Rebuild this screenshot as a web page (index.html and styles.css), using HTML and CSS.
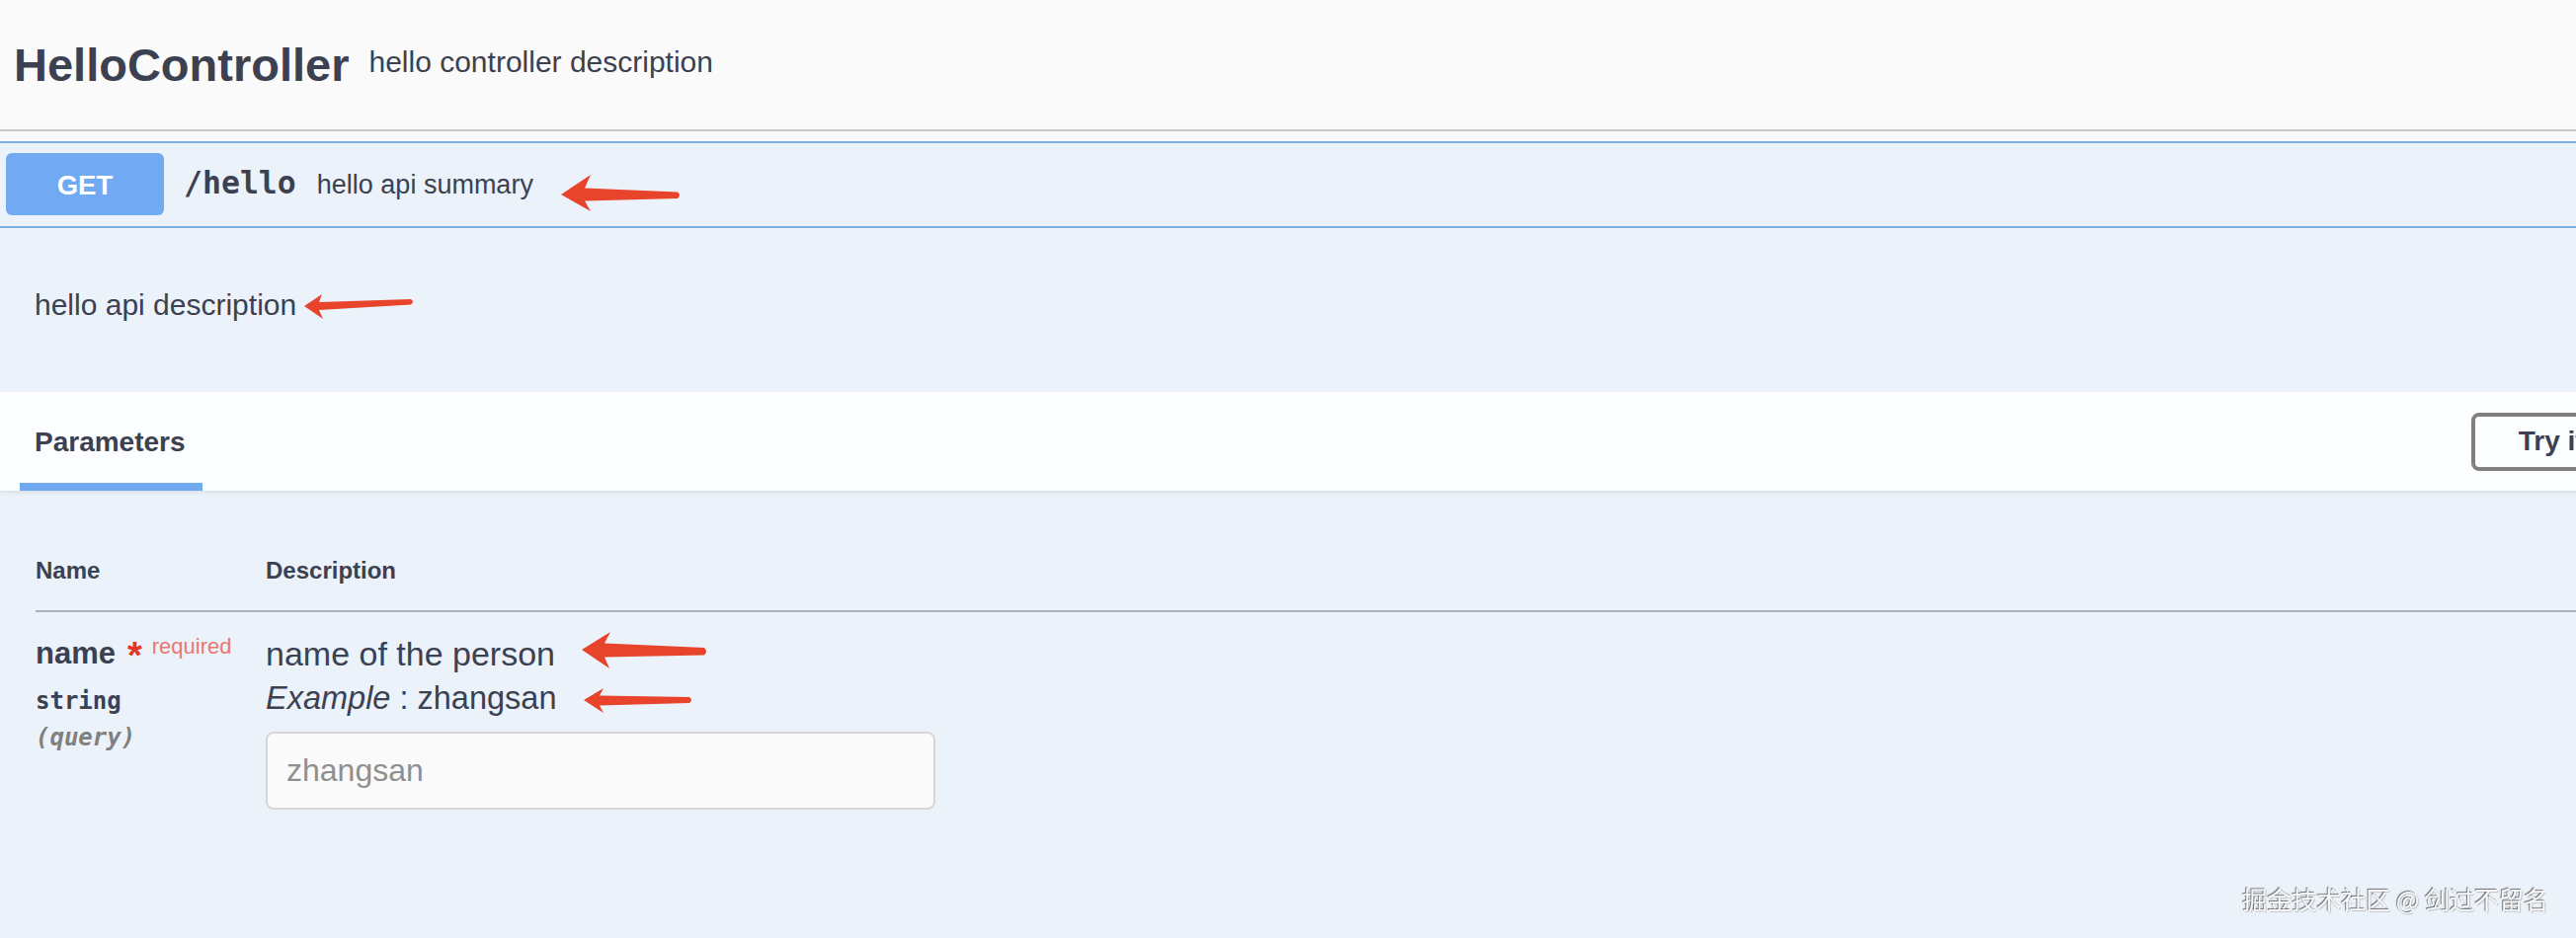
FILE: index.html
```html
<!DOCTYPE html>
<html lang="zh-CN">
<head>
<meta charset="utf-8">
<title>HelloController</title>
<link rel="stylesheet" href="styles.css">
</head>
<body>
<div class="page">
  <header class="tag">
    <h3 class="tag-title">HelloController</h3>
    <small class="tag-desc">hello controller description</small>
  </header>
  <section class="opblock">
    <div class="summary">
      <span class="method">GET</span>
      <span class="summary-text"><span class="path">/hello</span><span class="summary-desc">hello api summary</span></span>
    </div>
    <div class="description"><p>hello api description</p></div>
    <div class="section-header">
      <div class="tab"><h4>Parameters</h4></div>
      <button class="try-btn" type="button">Try it out</button>
    </div>
    <div class="params">
      <div class="params-head"><div>Name</div><div>Description</div></div>
      <div class="params-row">
        <div class="col-name">
          <div class="pname">name<span class="star">*</span><span class="req">required</span></div>
          <div class="ptype">string</div>
          <div class="pin">(query)</div>
        </div>
        <div class="col-desc">
          <p class="pdesc">name of the person</p>
          <p class="pexample"><i>Example</i> : zhangsan</p>
          <input class="pinput" type="text" placeholder="zhangsan" disabled>
        </div>
      </div>
    </div>
  </section>

  <svg class="arrow arrow-summary" viewBox="0 0 122 37"><path d="M0,20 L30,0 L24,13.5 L118,17.5 Q122,20.5 118,24 L24,26.5 L30,37 Z"/></svg>
  <svg class="arrow arrow-desc" viewBox="0 0 112 25"><path d="M0,12 L18,0 L15,8 L108,5 Q112,7.5 108,10.5 L15,16 L19,25 Z"/></svg>
  <svg class="arrow arrow-pdesc" viewBox="0 0 128 37"><path d="M0,18 L29,0 L23,11.5 L124,16 Q128,19.5 124,23.5 L23,25.5 L28,37 Z"/></svg>
  <svg class="arrow arrow-example" viewBox="0 0 111 25"><path d="M0,12 L20,0 L16,7.5 L107,9 Q111,12 107,15 L16,17.5 L20,25 Z"/></svg>
</div>
<div class="watermark">掘金技术社区 @ 剑过不留名</div>
</body>
</html>
```
FILE: styles.css
```css
html, body {
  margin: 0;
  padding: 0;
}

body {
  width: 2608px;
  height: 950px;
  overflow: hidden;
  background: #ecf2fa;
  font-family: "Liberation Sans", Arial, sans-serif;
  color: #3b4151;
}

.page {
  position: relative;
  width: 2756px;
  min-height: 950px;
  background: #f8f9fb;
}

/* tag header */
.tag {
  display: flex;
  align-items: flex-start;
  box-sizing: border-box;
  height: 133px;
  padding: 36px 0 0 14px;
  background: #fafafa;
  border-bottom: 2px solid #c5c6c9;
  margin-bottom: 10px;
}

.tag-title {
  margin: 0;
  font-size: 47px;
  font-weight: 700;
  line-height: 60px;
}

.tag-desc {
  margin: 7px 0 0 20px;
  font-size: 30px;
  line-height: 40px;
}

/* operation block */
.opblock {
  box-sizing: border-box;
  min-height: 807px;
  background: #ecf2fa;
  border-top: 2px solid #7eaee2;
}

.summary {
  display: flex;
  align-items: center;
  box-sizing: border-box;
  height: 86px;
  padding: 10px 0 11px 6px;
  border-bottom: 2px solid #7eaee2;
}

.method {
  display: flex;
  align-items: center;
  justify-content: center;
  box-sizing: border-box;
  width: 160px;
  height: 63px;
  padding-top: 2px;
  border-radius: 6px;
  background: #71aaf2;
  color: #fff;
  font-size: 27.5px;
  font-weight: 700;
}

.summary-text {
  margin-left: 20px;
  padding-top: 2px;
  font-size: 27px;
  line-height: 63px;
}

.path {
  font-family: "DejaVu Sans Mono", monospace;
  font-weight: 700;
  font-size: 31.5px;
  line-height: 1;
}

.summary-desc {
  margin-left: 21px;
  line-height: 1;
}

.description {
  padding: 58px 0 68px 35px;
}

.description p {
  margin: 0;
  font-size: 30px;
  line-height: 40px;
}

/* section header */
.section-header {
  display: flex;
  align-items: center;
  justify-content: space-between;
  box-sizing: border-box;
  height: 100px;
  padding: 0 40px 0 20px;
  background: #fcfdfe;
  box-shadow: 0 2px 4px rgba(0, 0, 0, 0.08);
}

.tab {
  align-self: stretch;
  box-sizing: border-box;
  padding: 31px 17px 0 15px;
  border-bottom: 8px solid #6fa9ef;
}

.tab h4 {
  margin: 0;
  font-size: 28px;
  font-weight: 700;
  line-height: 40px;
}

.try-btn {
  box-sizing: border-box;
  height: 59px;
  padding: 0 44px;
  border: 4px solid #808080;
  border-radius: 8px;
  background: transparent;
  font-family: inherit;
  font-size: 28px;
  font-weight: 700;
  color: #3b4151;
}

/* parameters table */
.params {
  padding-left: 36px;
}

.params-head {
  display: grid;
  grid-template-columns: 233px 1fr;
  padding: 66px 0 25px;
  border-bottom: 2px solid #adb0b8;
  font-size: 24px;
  font-weight: 700;
  line-height: 30px;
}

.params-row {
  display: grid;
  grid-template-columns: 233px 1fr;
  padding-top: 22px;
}

.pname {
  font-size: 31px;
  font-weight: 700;
  line-height: 40px;
}

.star {
  margin-left: 12px;
  font-size: 38px;
  line-height: 0;
  vertical-align: -5px;
  color: #e5352b;
}

.req {
  margin-left: 10px;
  font-size: 22px;
  font-weight: 400;
  line-height: 1;
  color: #ea7772;
  vertical-align: 10px;
}

.ptype,
.pin {
  font-family: "DejaVu Sans Mono", monospace;
  font-size: 24px;
  font-weight: 700;
  line-height: 30px;
}

.ptype {
  margin-top: 13px;
}

.pin {
  margin-top: 7px;
  font-style: italic;
  color: #808080;
}

.pdesc,
.pexample {
  margin: 0;
  font-size: 32.5px;
  line-height: 40px;
}

.pdesc {
  font-size: 34px;
}

.pexample {
  margin-top: 5px;
}

.pinput {
  display: block;
  box-sizing: border-box;
  width: 678px;
  height: 79px;
  margin: 14px 0 0;
  padding: 0 19px;
  border: 2px solid #d7d7d7;
  border-radius: 8px;
  background: #fafafa;
  font-family: inherit;
  font-size: 32px;
  color: #3b4151;
}

.pinput::placeholder {
  color: #8f8f8f;
  opacity: 1;
}

/* annotation arrows */
.arrow {
  position: absolute;
  fill: #e8432b;
}

.arrow-summary {
  left: 568px;
  top: 177px;
  width: 122px;
  height: 37px;
}

.arrow-desc {
  left: 308px;
  top: 298px;
  width: 112px;
  height: 25px;
}

.arrow-pdesc {
  left: 589px;
  top: 640px;
  width: 128px;
  height: 37px;
}

.arrow-example {
  left: 591px;
  top: 697px;
  width: 111px;
  height: 25px;
}

/* watermark */
.watermark {
  position: fixed;
  right: 28px;
  bottom: 25px;
  font-family: "Noto Sans CJK SC", sans-serif;
  font-size: 25px;
  line-height: 30px;
  color: #fafafa;
  text-shadow: -1px -1px 1px rgba(0, 0, 0, 0.55), 1px 1px 1px rgba(0, 0, 0, 0.2);
}
```
